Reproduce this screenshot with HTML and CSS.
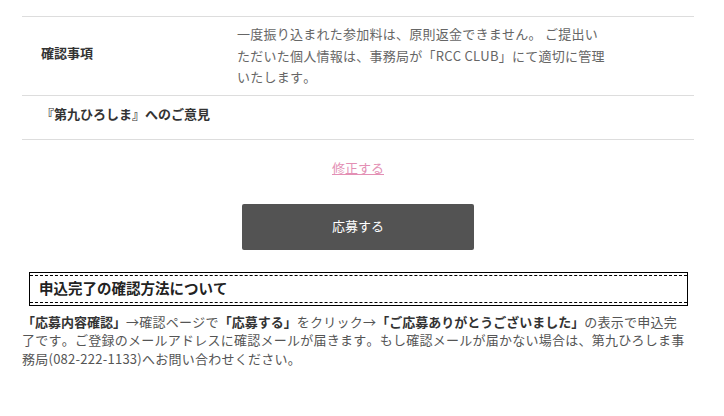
FILE: index.html
```html
<!DOCTYPE html>
<html lang="ja">
<head>
    <meta charset="UTF-8">
    <meta name="viewport" content="width=device-width, initial-scale=1.0">
    <title>応募内容確認</title>
    <link rel="stylesheet" href="styles.css">
</head>
<body>
    <div class="confirm-container">
        <div class="confirm-table">
            <div class="confirm-row">
                <div class="confirm-label">確認事項</div>
                <div class="confirm-value">一度振り込まれた参加料は、原則返金できません。 ご提出いただいた個人情報は、事務局が「RCC CLUB」にて適切に管理いたします。</div>
            </div>
            <div class="confirm-row row-short">
                <div class="confirm-label">『第九ひろしま』へのご意見</div>
                <div class="confirm-value"></div>
            </div>
        </div>

        <div class="edit-link-wrap">
            <a href="#" class="edit-link">修正する</a>
        </div>

        <div class="submit-wrap">
            <button type="submit" class="submit-button">応募する</button>
        </div>

        <div class="notice-box">
            <h3 class="notice-title">申込完了の確認方法について</h3>
        </div>
        <p class="notice-text"><strong>「応募内容確認」</strong>→確認ページで<strong>「応募する」</strong>をクリック→<strong>「ご応募ありがとうございました」</strong>の表示で申込完了です。ご登録のメールアドレスに確認メールが届きます。もし確認メールが届かない場合は、第九ひろしま事務局(082-222-1133)へお問い合わせください。</p>
    </div>
</body>
</html>
```

FILE: styles.css
```css
body {
    margin: 0;
    background-color: #FFFFFF;
    font-family: "Noto Sans CJK JP", "Noto Sans", sans-serif;
    font-size: 13px;
    color: #555;
    font-kerning: none;
    font-feature-settings: "kern" 0, "palt" 0;
}
.confirm-container {
    width: 672px;
    margin: 0 0 0 22px;
    padding-top: 16px;
}
.confirm-table {
    border-top: 1px solid #ddd;
}
.confirm-row {
    display: grid;
    grid-template-columns: 215px 370px;
    align-items: center;
    border-bottom: 1px solid #ddd;
    padding: 6px 0 7px;
}
.row-short {
    min-height: 44px;
    box-sizing: border-box;
    padding: 0;
}
.confirm-label {
    padding-left: 19px;
    font-weight: bold;
    color: #333;
    margin-top: -5px;
}
.row-short .confirm-label {
    margin-top: -7px;
}
.confirm-value {
    line-height: 21.5px;
    letter-spacing: 0.25px;
    color: #666;
}
.edit-link-wrap {
    text-align: center;
    margin-top: 19px;
    line-height: 18px;
}
.edit-link {
    color: #e38fb4;
    text-decoration: underline;
}
.submit-wrap {
    display: flex;
    justify-content: center;
    margin-top: 27px;
}
.submit-button {
    width: 232px;
    height: 46px;
    background-color: #535353;
    color: white;
    border: none;
    border-radius: 2px;
    font-family: inherit;
    font-size: 13px;
    padding: 0 0 2px;
}
.notice-box {
    margin: 22px 6px 0 7px;
    border: 1px solid #000;
    padding: 2px 0;
}
.notice-title {
    margin: 0;
    border-top: 1px dashed #000;
    border-bottom: 1px dashed #000;
    padding: 0 9px;
    height: 26px;
    line-height: 24px;
    font-size: 14.5px;
    color: #222;
}
.notice-text {
    margin: 7px 6px 0 0;
    line-height: 18.5px;
    letter-spacing: 0.25px;
    color: #555;
}
.notice-text strong {
    color: #333;
    letter-spacing: 0;
}
```
